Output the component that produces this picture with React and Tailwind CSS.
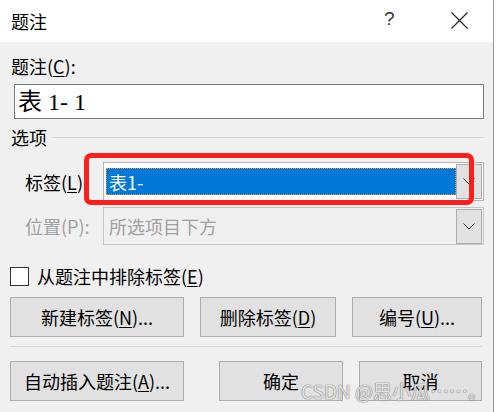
import React from 'react';

const font = { fontFamily: '"Noto Sans CJK SC", "Noto Sans", sans-serif' };

function Chevron() {
  return (
    <svg width="12" height="7" viewBox="0 0 12 7" fill="none">
      <path d="M0.5 0.5 L6 6 L11.5 0.5" stroke="#333" strokeWidth="1" />
    </svg>
  );
}

function Combo({ children, disabled }) {
  return (
    <div
      className={`flex h-full w-[381px] items-center border ${disabled ? 'border-[#c4c4c4] bg-[#f0f0f0]' : 'border-[#b4b4b4] bg-white'} pl-[1px] pr-[1px]`}
    >
      <div className="flex h-full flex-1 items-center py-[5px] pl-[1px]">{children}</div>
      <div className="flex h-[35px] w-[26px] items-center justify-center border border-[#adadad] bg-[#e1e1e1]">
        <Chevron />
      </div>
    </div>
  );
}

function Btn({ w, children }) {
  return (
    <div
      className="flex h-[40px] items-center justify-center border border-[#adadad] bg-[#e1e1e1] text-[18px] text-black"
      style={{ width: w }}
    >
      {children}
    </div>
  );
}

export default function App() {
  return (
    <div className="relative flex h-[412px] w-[496px] overflow-hidden bg-white leading-none text-black" style={font}>
      <div className="flex h-full w-[493px] flex-col">
        {/* title bar */}
        <div className="relative flex h-[42px] shrink-0 items-center bg-white pl-[11px] text-[18px]">
          <span>题注</span>
          <span className="absolute left-[384px] top-[9px] text-[19px] text-[#333]" style={{ fontFamily: '"Liberation Sans", sans-serif' }}>
            ?
          </span>
          <svg className="absolute left-[451px] top-[12px]" width="17" height="17" viewBox="0 0 17 17">
            <path d="M0.5 0.5 L16.5 16.5 M16.5 0.5 L0.5 16.5" stroke="#222" strokeWidth="1.1" />
          </svg>
        </div>

        {/* body */}
        <div className="flex flex-1 flex-col bg-[#f0f0f0]">
          <div className="mt-[12px] flex h-[24px] items-center pl-[11px] text-[18px]">
            题注(<span className="underline underline-offset-2">C</span>):
          </div>

          <div className="ml-[14px] mt-[6px] flex h-[35px] w-[470px] items-center border border-[#7a7a7a] bg-white pl-[3px] text-[24px]">
            <span style={{ fontFamily: '"Liberation Serif", "Noto Sans CJK SC", serif' }}>表 1- 1</span>
          </div>

          <div className="mt-[6px] flex h-[24px] items-center pl-[11px] text-[18px]">
            <span>选项</span>
            <div className="ml-[5px] h-px w-[432px] bg-[#d9d9d9]" />
          </div>

          <div className="mt-[13px] flex h-[39px] items-center pl-[25px]">
            <span className="w-[78px] text-[18px]">
              标签(<span className="underline underline-offset-2">L</span>):
            </span>
            <Combo>
              <div className="flex h-full w-full items-center border border-dotted border-[#e0962e] bg-[#0078d7] pl-[2px] text-[18px] text-white">
                表1-
              </div>
            </Combo>
          </div>

          <div className="mt-[6px] flex h-[38px] items-center pl-[25px] text-[#a0a0a0]">
            <span className="w-[78px] text-[18px]">位置(P):</span>
            <Combo disabled>
              <span className="pl-[3px] text-[18px]">所选项目下方</span>
            </Combo>
          </div>

          <div className="mt-[20px] flex h-[22px] items-center pl-[10px] text-[18px]">
            <div className="h-[19px] w-[19px] border border-[#333] bg-white" />
            <span className="ml-[8px]">
              从题注中排除标签(<span className="underline underline-offset-2">E</span>)
            </span>
          </div>

          <div className="mt-[10px] flex pl-[10px]">
            <Btn w={174}>
              新建标签(<span className="underline underline-offset-2">N</span>)...
            </Btn>
            <div className="ml-[16px]">
              <Btn w={136}>
                删除标签(<span className="underline underline-offset-2">D</span>)
              </Btn>
            </div>
            <div className="ml-[16px]">
              <Btn w={130}>
                编号(<span className="underline underline-offset-2">U</span>)...
              </Btn>
            </div>
          </div>

          <div className="ml-[10px] mt-[9px] h-px w-[472px] bg-[#dadada]" />

          <div className="mt-[14px] flex pl-[10px]">
            <Btn w={174}>
              自动插入题注(<span className="underline underline-offset-2">A</span>)...
            </Btn>
            <div className="ml-[35px]">
              <Btn w={124}>确定</Btn>
            </div>
            <div className="ml-[16px]">
              <Btn w={123}>取消</Btn>
            </div>
          </div>
        </div>
      </div>

      {/* window behind */}
      <div className="h-full w-[3px] border-l border-[#9a9a9a] bg-white" />

      {/* red annotation */}
      <div className="pointer-events-none absolute left-[84px] top-[153px] h-[52px] w-[390px] rounded-[7px] border-[5px] border-[#ff1e1e]" />

      {/* watermark */}
      <div
        className="pointer-events-none absolute left-[301px] top-[381px] whitespace-nowrap text-[19px] text-white/80 [text-shadow:0_0_1px_#6f6f6f,0_0_1px_#6f6f6f]"
        style={{ fontFamily: '"Noto Sans CJK SC", "Liberation Sans", sans-serif' }}
      >
        CSDN @思小瓜……。
      </div>
    </div>
  );
}
